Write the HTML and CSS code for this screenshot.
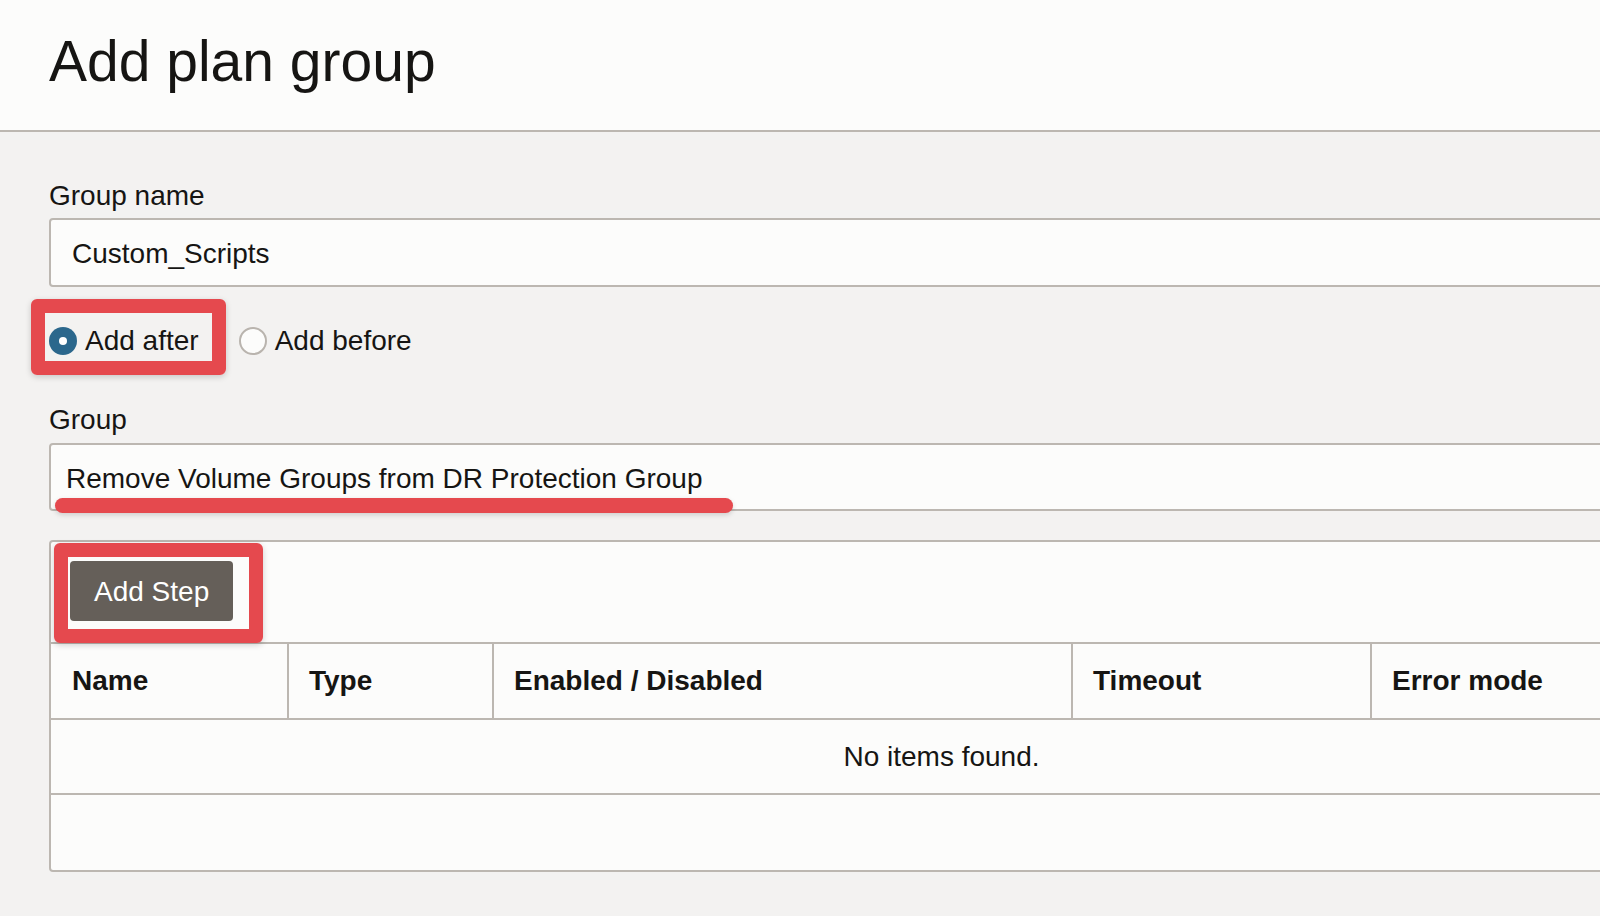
FILE: index.html
```html
<!DOCTYPE html>
<html lang="en">
<head>
<meta charset="utf-8">
<title>Add plan group</title>
<link rel="stylesheet" href="styles.css">
</head>
<body>
<header class="page-header">
  <h1 class="page-title">Add plan group</h1>
</header>
<main class="form">
  <div class="field">
    <div class="field-label">Group name</div>
    <div class="text-input">Custom_Scripts</div>
  </div>

  <div class="radio-group">
    <span class="radio-option radio-option--first">
      <span class="radio radio--checked"></span>
      <span class="radio-text">Add after</span>
      <span class="annot-box annot-box--radio"></span>
    </span>
    <span class="radio-option">
      <span class="radio"></span>
      <span class="radio-text">Add before</span>
    </span>
  </div>

  <div class="field field--group">
    <div class="field-label">Group</div>
    <div class="select-input">
      <span class="select-value">Remove Volume Groups from DR Protection Group</span>
      <span class="annot-underline"></span>
    </div>
  </div>

  <section class="steps-panel">
    <div class="toolbar">
      <button class="btn" type="button">Add Step</button>
      <span class="annot-box annot-box--button"></span>
    </div>
    <div class="grid-table">
      <div class="grid-row grid-row--head">
        <div class="cell">Name</div>
        <div class="cell">Type</div>
        <div class="cell">Enabled / Disabled</div>
        <div class="cell">Timeout</div>
        <div class="cell">Error mode</div>
      </div>
      <div class="grid-row grid-row--empty">
        <div class="empty-msg">No items found.</div>
      </div>
      <div class="grid-footer"></div>
    </div>
  </section>
</main>
</body>
</html>
```
FILE: styles.css
```css
html, body {
  margin: 0;
  padding: 0;
  overflow: hidden;
}

body {
  background: #f3f2f1;
  color: #161513;
  font-family: "Liberation Sans", Arial, sans-serif;
  font-size: 28px;
  line-height: 32px;
  width: 1600px;
  height: 916px;
}

.page-header {
  box-sizing: border-box;
  height: 132px;
  background: #fcfcfb;
  border-bottom: 2px solid #bcb7b1;
  padding: 33px 0 0 49px;
}

.page-title {
  margin: 0;
  font-size: 57px;
  line-height: 57px;
  font-weight: 400;
  color: #161513;
}

.form {
  width: 1785px;
  padding: 46px 0 0 49px;
}

.field-label {
  box-sizing: border-box;
  height: 32px;
  padding-top: 2px;
  margin-bottom: 8px;
}

.text-input {
  box-sizing: border-box;
  height: 69px;
  background: #fcfcfb;
  border: 2px solid #bcb7b1;
  border-radius: 4px;
  padding: 2px 21px 0;
  display: flex;
  align-items: center;
}

.radio-group {
  display: flex;
  align-items: center;
  gap: 40px;
  margin-top: 38px;
  height: 32px;
}

.radio-option {
  position: relative;
  display: flex;
  align-items: center;
  gap: 8px;
}

.radio {
  box-sizing: border-box;
  width: 28px;
  height: 28px;
  border-radius: 50%;
  border: 2px solid #b9b4ae;
  background: #fcfcfb;
  position: relative;
  flex: none;
}

.radio--checked {
  border: none;
  background: #2b678c;
}

.radio--checked::after {
  content: "";
  position: absolute;
  left: 10px;
  top: 10px;
  width: 8px;
  height: 8px;
  border-radius: 50%;
  background: #ffffff;
}

.field--group {
  margin-top: 45px;
}

.field--group .field-label {
  margin-bottom: 9px;
}

.select-input {
  position: relative;
  box-sizing: border-box;
  height: 68px;
  background: #fcfcfb;
  border: 2px solid #bcb7b1;
  border-radius: 4px;
  padding: 4px 15px 0;
  display: flex;
  align-items: center;
}

.annot-box {
  position: absolute;
  box-sizing: border-box;
  border: 14px solid #e5494e;
  border-radius: 6px;
  box-shadow: 0 2px 6px rgba(0, 0, 0, 0.18);
  pointer-events: none;
  z-index: 2;
}

.annot-box--radio {
  left: -18px;
  top: -26px;
  width: 195px;
  height: 76px;
}

.annot-underline {
  position: absolute;
  left: 4px;
  top: 53px;
  width: 678px;
  height: 15px;
  border-radius: 8px;
  background: #e5494e;
  box-shadow: 0 2px 5px rgba(0, 0, 0, 0.15);
  z-index: 2;
}

.steps-panel {
  margin-top: 29px;
  box-sizing: border-box;
  width: 1785px;
  background: #fcfcfb;
  border: 2px solid #bcb7b1;
  border-radius: 4px;
}

.toolbar {
  position: relative;
  padding: 19px 0 21px 19px;
  display: flex;
}

.btn {
  box-sizing: border-box;
  height: 60px;
  padding: 1px 24px 0;
  border: none;
  border-radius: 4px;
  background: #655f59;
  color: #ffffff;
  font-family: "Liberation Sans", Arial, sans-serif;
  font-size: 28px;
  line-height: 32px;
}

.annot-box--button {
  left: 3px;
  top: 1px;
  width: 209px;
  height: 100px;
}

.grid-row {
  display: grid;
  grid-template-columns: 236px 205px 579px 299px 462px;
  border-top: 2px solid #bcb7b1;
}

.grid-row--head {
  height: 76px;
  box-sizing: border-box;
  font-weight: 700;
}

.grid-row--head .cell {
  display: flex;
  align-items: center;
  padding-left: 20px;
}

.grid-row--head .cell:first-child {
  padding-left: 21px;
}

.grid-row--head .cell + .cell {
  border-left: 2px solid #bcb7b1;
}

.grid-row--empty {
  display: flex;
  align-items: center;
  justify-content: center;
  height: 75px;
  box-sizing: border-box;
}

.grid-footer {
  height: 77px;
  box-sizing: border-box;
  border-top: 2px solid #bcb7b1;
}
```
